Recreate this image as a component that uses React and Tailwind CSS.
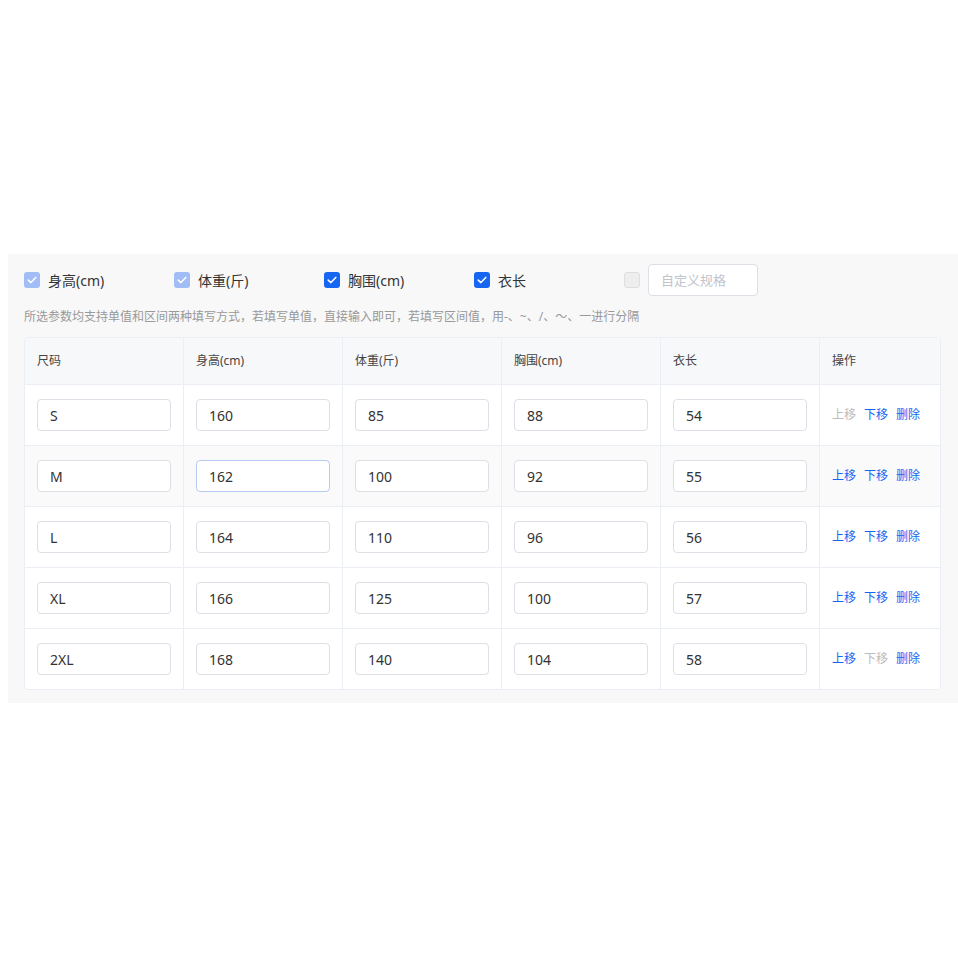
import { useState } from "react";

const SPECS = [
  { key: "height", label: "身高(cm)", checked: true, locked: true },
  { key: "weight", label: "体重(斤)", checked: true, locked: true },
  { key: "chest", label: "胸围(cm)", checked: true, locked: false },
  { key: "length", label: "衣长", checked: true, locked: false },
];

const ROWS = [
  ["S", "160", "85", "88", "54"],
  ["M", "162", "100", "92", "55"],
  ["L", "164", "110", "96", "56"],
  ["XL", "166", "125", "100", "57"],
  ["2XL", "168", "140", "104", "58"],
];

const HEADERS = ["尺码", "身高(cm)", "体重(斤)", "胸围(cm)", "衣长", "操作"];

const Check = ({ checked, locked }) => {
  if (!checked) {
    return <span className="w-4 h-4 rounded-[3px] border border-[#dedede] bg-[#eeeeee] shrink-0" />;
  }
  return (
    <span
      className={`w-4 h-4 rounded-[3px] flex items-center justify-center shrink-0 ${
        locked ? "bg-[#a2bcf6]" : "bg-[#1766f2]"
      }`}
    >
      <svg width="10" height="8" viewBox="0 0 10 8" fill="none">
        <path d="M1.2 4.1 L3.9 6.6 L8.8 1.4" stroke="white" strokeWidth="1.5" strokeLinecap="round" strokeLinejoin="round" />
      </svg>
    </span>
  );
};

const Cell = ({ value, focused }) => (
  <input
    defaultValue={value}
    className={`w-[134px] h-8 px-3 rounded-[4px] border bg-white text-[14px] text-[#333] outline-none ${
      focused ? "border-[#b6c9ee]" : "border-[#dcdfe6]"
    }`}
  />
);

export default function App() {
  const [rows] = useState(ROWS);

  return (
    <div
      className="min-h-[958px] bg-white pt-[254px] pl-2"
      style={{ fontFamily: '"Noto Sans", "Noto Sans CJK SC", sans-serif' }}
    >
      <div className="w-[950px] bg-[#f8f8f8] pt-[10px] pb-[13px] pl-4">
        {/* spec toggles */}
        <div className="flex items-center h-8">
          {SPECS.map((s) => (
            <label key={s.key} className="w-[150px] flex items-center gap-2 text-[14px] text-[#333]">
              <Check checked={s.checked} locked={s.locked} />
              <span>{s.label}</span>
            </label>
          ))}
          <div className="flex items-center gap-2">
            <Check checked={false} />
            <input
              placeholder="自定义规格"
              className="w-[110px] h-8 px-3 rounded-[4px] border border-[#dcdfe6] bg-white text-[13px] placeholder:text-[#c0c4cc] outline-none"
            />
          </div>
        </div>

        <p className="mt-[13px] text-[12px] leading-4 text-[#999]">
          所选参数均支持单值和区间两种填写方式，若填写单值，直接输入即可，若填写区间值，用-、~、/、～、一进行分隔
        </p>

        {/* size table */}
        <div className="mt-[12px] w-[917px] rounded-[4px] border border-[#ebeef5] bg-white overflow-hidden">
          <div className="grid grid-cols-[159px_159px_159px_159px_159px_122px] h-[47px] bg-[#f7f8fa] border-b border-[#ebeef5]">
            {HEADERS.map((h, i) => (
              <div
                key={h}
                className={`flex items-center px-3 text-[12px] text-[#444] ${i < 5 ? "border-r border-[#ebeef5]" : ""}`}
              >
                {h}
              </div>
            ))}
          </div>
          {rows.map((r, ri) => {
            const last = ri === rows.length - 1;
            return (
              <div
                key={r[0]}
                className={`grid grid-cols-[159px_159px_159px_159px_159px_122px] ${
                  last ? "h-[60px]" : "h-[61px] border-b border-[#ebeef5]"
                } ${ri === 1 ? "bg-[#fafafa]" : "bg-white"}`}
              >
                {r.map((v, ci) => (
                  <div key={ci} className="flex items-center px-3 border-r border-[#ebeef5]">
                    <Cell value={v} focused={ri === 1 && ci === 1} />
                  </div>
                ))}
                <div className="flex items-center gap-2 px-3 text-[12px]">
                  <button className={ri === 0 ? "text-[#bbbbbb]" : "text-[#1766f2]"}>上移</button>
                  <button className={last ? "text-[#bbbbbb]" : "text-[#1766f2]"}>下移</button>
                  <button className="text-[#1766f2]">删除</button>
                </div>
              </div>
            );
          })}
        </div>
      </div>
    </div>
  );
}
